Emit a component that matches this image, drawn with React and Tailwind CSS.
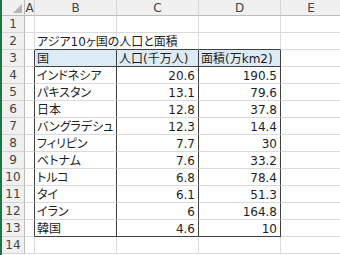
import React from "react";

const data = [
  ["インドネシア", "20.6", "190.5"],
  ["パキスタン", "13.1", "79.6"],
  ["日本", "12.8", "37.8"],
  ["バングラデシュ", "12.3", "14.4"],
  ["フィリピン", "7.7", "30"],
  ["ベトナム", "7.6", "33.2"],
  ["トルコ", "6.8", "78.4"],
  ["タイ", "6.1", "51.3"],
  ["イラン", "6", "164.8"],
  ["韓国", "4.6", "10"],
];

const font = "font-['DejaVu_Sans','Noto_Sans_CJK_JP',sans-serif] [font-feature-settings:'palt']";

// one worksheet cell; right/bottom borders draw the grid
const Cell = ({ w, children, right = "light", bottom = "light", align = "left", fill = "" }) => (
  <div
    className={`h-full shrink-0 flex items-end pb-[1px] text-[12px] leading-none text-[#1e1e1e] overflow-visible whitespace-nowrap border-r border-b ${
      right === "dark" ? "border-r-[#404040]" : "border-r-[#dadada]"
    } ${bottom === "dark" ? "border-b-[#404040]" : "border-b-[#dadada]"} ${
      align === "right" ? "justify-end pr-[3px]" : "justify-start pl-[2px]"
    } ${fill}`}
    style={{ width: w }}
  >
    {children}
  </div>
);

const RowHead = ({ n }) => (
  <div className="w-[25px] h-full shrink-0 flex items-center justify-center bg-[#f0f0f0] border-r border-b border-r-[#bcbcbc] border-b-[#d4d4d4] text-[12px] text-[#444]">
    {n}
  </div>
);

const ColHead = ({ w, label, last }) => (
  <div
    className={`h-full shrink-0 flex items-center justify-center bg-[#f0f0f0] border-b border-b-[#bcbcbc] text-[12px] text-[#444] ${
      last ? "grow" : "border-r border-r-[#d4d4d4]"
    }`}
    style={last ? undefined : { width: w }}
  >
    {label}
  </div>
);

export default function App() {
  return (
    <div className={`w-[340px] h-[255px] bg-white overflow-hidden flex ${font}`}>
      <div className="w-[2px] h-full bg-[#217346] shrink-0" />
      <div className="flex flex-col grow">
        {/* column header */}
        <div className="flex h-[16px]">
          <div className="w-[23px] h-full shrink-0 bg-[#f0f0f0] border-r border-b border-r-[#bcbcbc] border-b-[#bcbcbc] relative">
            <svg className="absolute right-[2px] bottom-[2px]" width="9" height="9" viewBox="0 0 9 9">
              <polygon points="9,0 9,9 0,9" fill="#b4b4b4" />
            </svg>
          </div>
          <ColHead w={10} label="A" />
          <ColHead w={82} label="B" />
          <ColHead w={82} label="C" />
          <ColHead w={82} label="D" />
          <ColHead label="E" last />
        </div>

        {/* row 1 */}
        <Row n={1} />
        {/* row 2 */}
        <Row n={2} title bottomDark />
        {/* row 3: table header */}
        <div className="flex h-[17px]">
          <RowHeadFirst n={3} />
          <Cell w={10} right="dark" />
          <Cell w={82} right="dark" bottom="dark" fill="bg-[#ddebf7]">国</Cell>
          <Cell w={82} right="dark" bottom="dark" fill="bg-[#ddebf7]">人口(千万人)</Cell>
          <Cell w={82} right="dark" bottom="dark" fill="bg-[#ddebf7]">面積(万km2)</Cell>
          <Cell w={60} />
        </div>
        {data.map(([name, pop, area], i) => (
          <div key={name} className="flex h-[17px]">
            <RowHeadFirst n={i + 4} />
            <Cell w={10} right="dark" />
            <Cell w={82} right="dark" bottom={i === 9 ? "dark" : "light"}>{name}</Cell>
            <Cell w={82} right="dark" bottom={i === 9 ? "dark" : "light"} align="right">{pop}</Cell>
            <Cell w={82} right="dark" bottom={i === 9 ? "dark" : "light"} align="right">{area}</Cell>
            <Cell w={60} />
          </div>
        ))}
        <Row n={14} />
      </div>
    </div>
  );
}

function RowHeadFirst({ n }) {
  return (
    <div className="w-[23px] h-full shrink-0 flex items-center justify-center bg-[#f0f0f0] border-r border-b border-r-[#bcbcbc] border-b-[#d4d4d4] text-[12px] text-[#444]">
      {n}
    </div>
  );
}

function Row({ n, title, bottomDark }) {
  return (
    <div className="flex h-[17px]">
      <RowHeadFirst n={n} />
      <Cell w={10} />
      <Cell w={82} bottom={bottomDark ? "dark" : "light"}>
        {title ? "アジア10ヶ国の人口と面積" : null}
      </Cell>
      <Cell w={82} bottom={bottomDark ? "dark" : "light"} />
      <Cell w={82} bottom={bottomDark ? "dark" : "light"} />
      <Cell w={60} />
    </div>
  );
}
